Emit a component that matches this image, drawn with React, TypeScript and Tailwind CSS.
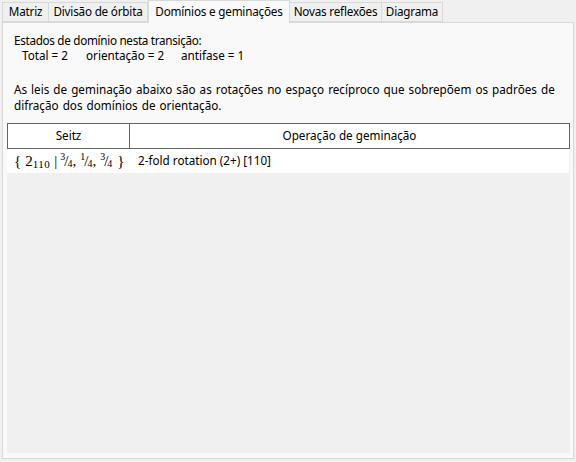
const tabs = [
  { label: "Matriz", w: "w-[47px]" },
  { label: "Divisão de órbita", w: "w-[99px]" },
  { label: "Domínios e geminações", w: "w-[142px]" },
  { label: "Novas reflexões", w: "w-[92px]" },
  { label: "Diagrama", w: "w-[61px]" },
]

// raised numerator, slash, lowered denominator
function Frac({ n, d }: { n: string; d: string }) {
  return (
    <span className="inline-flex items-center h-[20px]">
      <span className="text-[10px] leading-none relative -top-[4px]">{n}</span>
      <span className="text-[15px] leading-none -ml-[1px]">/</span>
      <span className="text-[10px] leading-none relative top-[3px] -ml-[1px]">{d}</span>
    </span>
  )
}

export default function App() {
  const active = 2
  return (
    <div className="w-[576px] h-[462px] bg-[#f0f0f0] text-[11.7px] text-black font-['Segoe_UI','Noto_Sans',sans-serif] relative overflow-hidden">
      <div className="flex h-[22px] items-end pl-[2px]">
        {tabs.map((t, i) =>
          i === active ? (
            <div
              key={t.label}
              className={`${t.w} h-[23px] -mb-[1px] flex items-center justify-center whitespace-nowrap tracking-[-0.2px] bg-[#f9f9f9] border border-b-0 border-[#d9d9d9] relative z-10`}
            >
              {t.label}
            </div>
          ) : (
            <div
              key={t.label}
              className={`${t.w} h-[20px] flex items-center justify-center whitespace-nowrap tracking-[-0.2px] bg-[#f0f0f0] border border-[#d9d9d9] border-l-0 first:border-l`}
            >
              {t.label}
            </div>
          )
        )}
      </div>
      <div className="mx-[2px] h-[437px] bg-[#f9f9f9] border border-[#d9d9d9] flex flex-col">
        <div className="pl-[11px] pt-[10px] leading-[15px]">
          <div className="h-[15px] tracking-[-0.3px]">Estados de domínio nesta transição:</div>
          <div className="h-[15px] pl-[8px] flex">
            <span className="w-[64px]">Total = 2</span>
            <span className="w-[95px]">orientação = 2</span>
            <span>antifase = 1</span>
          </div>
        </div>
        <div className="pl-[11px] pt-[18px] leading-[16px] [word-spacing:1px]">
          As leis de geminação abaixo são as rotações no espaço recíproco que sobrepõem os padrões de
          <br />
          difração dos domínios de orientação.
        </div>
        <div className="mx-[4px] mt-[10px] mb-[5px] w-[563px] flex-1 bg-[#f0f0f0] flex flex-col">
          <div className="flex h-[26px] bg-white border border-[#646464]">
            <div className="w-[122px] border-r border-[#646464] flex items-center justify-center">Seitz</div>
            <div className="flex-1 flex items-center justify-center">Operação de geminação</div>
          </div>
          <div className="flex h-[24px] bg-white w-[562px] items-center">
            <div className="w-[123px] pl-[7px] font-['Liberation_Serif',serif] text-[15px] leading-none whitespace-nowrap flex items-center">
              <span>{"{"}</span>
              <span className="ml-[4px]">2</span>
              <span className="text-[11px] tracking-[0.5px] relative top-[3px]">110</span>
              <span className="ml-[4px] mr-[3px]">|</span>
              <Frac n="3" d="4" />
              <span className="mr-[4px]">,</span>
              <Frac n="1" d="4" />
              <span className="mr-[4px]">,</span>
              <Frac n="3" d="4" />
              <span className="ml-[5px]">{"}"}</span>
            </div>
            <div className="pl-[8px]">2-fold rotation (2+) [110]</div>
          </div>
        </div>
      </div>
    </div>
  )
}
